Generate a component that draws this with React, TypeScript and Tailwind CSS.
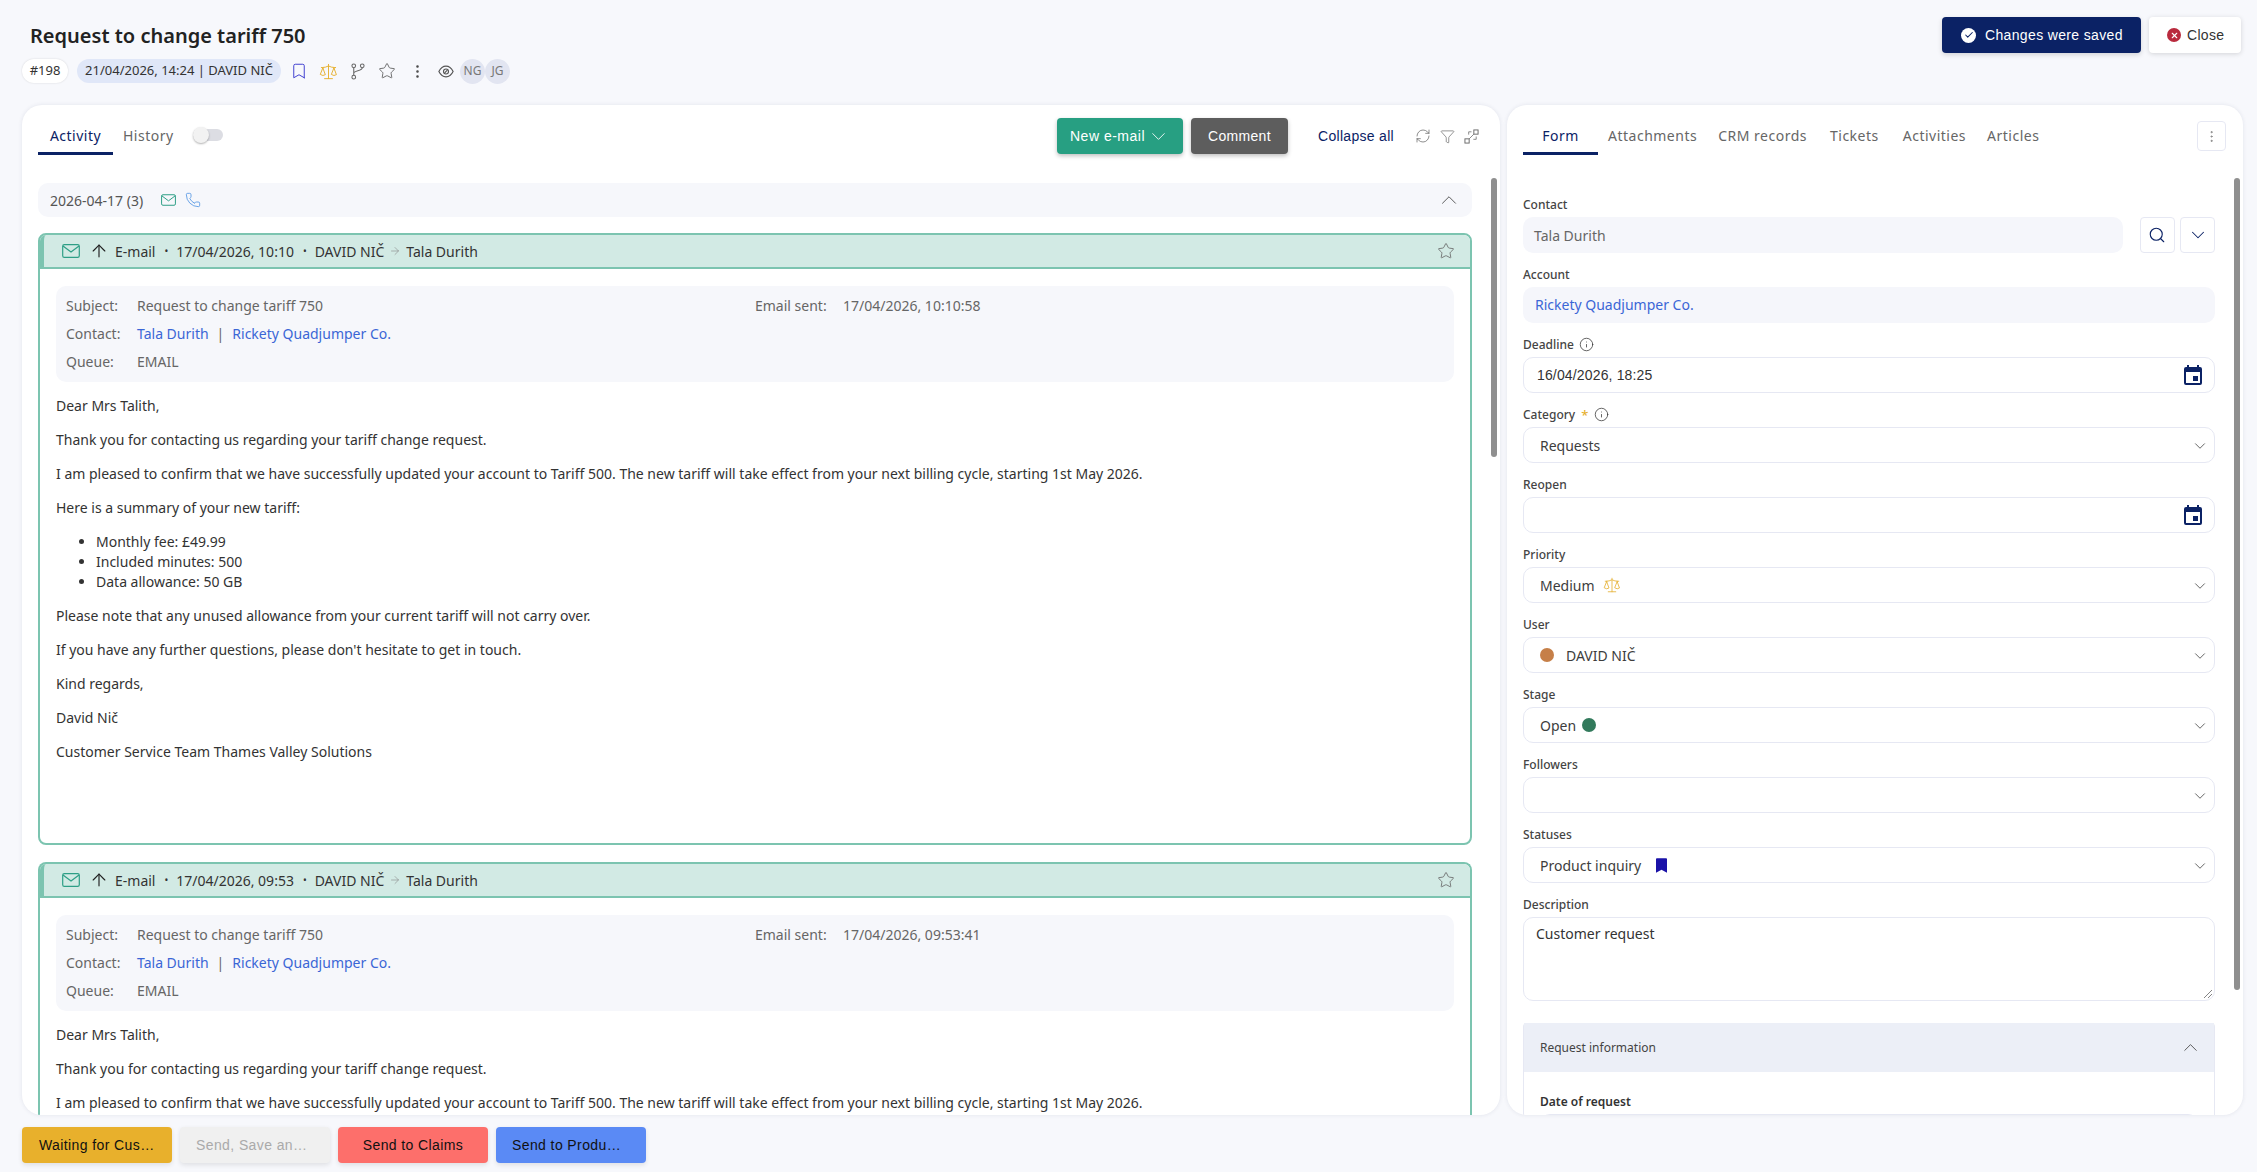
import type { ReactNode } from "react";
import {
  ArrowRight,
  ArrowUp,
  Bookmark,
  Check,
  ChevronDown,
  ChevronUp,
  EllipsisVertical,
  Filter,
  Info,
  Phone,
  RefreshCw,
  Scale,
  Search,
  Star,
  X,
} from "lucide-react";

const NOTO = "font-['Noto_Sans',sans-serif]";
const ARIAL = "font-['Liberation_Sans',Arial,sans-serif]";

function MailIcon({ className }: { className?: string }) {
  return (
    <svg viewBox="0 0 18 14" fill="none" stroke="currentColor" strokeWidth="1.2" className={className}>
      <rect x="0.7" y="0.7" width="16.6" height="12.6" rx="1.6" />
      <path d="M1 2l8 6 8-6" />
    </svg>
  );
}

function EventIcon() {
  return (
    <svg viewBox="0 0 18 20" className="h-[20px] w-[18px] text-[#0b2265]" fill="currentColor">
      <path d="M3 0h2v2h8V0h2v2h1a2 2 0 0 1 2 2v14a2 2 0 0 1-2 2H2a2 2 0 0 1-2-2V4a2 2 0 0 1 2-2h1zM2 7v11h14V7z" />
      <rect x="9" y="11" width="5" height="5" />
    </svg>
  );
}

function ExpandIcon() {
  return (
    <svg viewBox="0 0 16 16" fill="none" stroke="#666" strokeWidth="1" className="h-[15px] w-[15px]">
      <rect x="10.5" y="1" width="4.5" height="4.5" />
      <rect x="1" y="10.5" width="4.5" height="4.5" />
      <path d="M10.5 5.5l-5 5M8 3H5v3M13 8v3h-3" strokeWidth="0.8" />
    </svg>
  );
}

function EyeIcon() {
  return (
    <svg viewBox="0 0 18 14" fill="none" stroke="#555" strokeWidth="1.3" className="h-[13px] w-[16px]">
      <path d="M1 7c2-4 5-6 8-6s6 2 8 6c-2 4-5 6-8 6S3 11 1 7z" />
      <circle cx="9" cy="7" r="2.8" />
      <path d="M7.5 8.5l3-3" />
    </svg>
  );
}

function BranchIcon() {
  return (
    <svg viewBox="0 0 22 24" fill="none" stroke="#666" strokeWidth="1.5" className="ml-[12px] h-[17px] w-[16px]">
      <circle cx="5" cy="4" r="2.6" />
      <circle cx="5" cy="20" r="2.6" />
      <circle cx="17" cy="4" r="2.6" />
      <path d="M5 6.6v10.8M17 6.6c0 5-12 3.5-12 8" />
    </svg>
  );
}

function Field({
  label,
  extra,
  children,
}: {
  label: string;
  extra?: ReactNode;
  children: ReactNode;
}) {
  return (
    <div className="mb-[13px]">
      <div className="mb-[3px] flex h-[18px] items-center gap-[5px] text-[12px] font-medium leading-[18px] text-[#444]">
        {label}
        {extra}
      </div>
      {children}
    </div>
  );
}

function Box({ children, className = "" }: { children?: ReactNode; className?: string }) {
  return (
    <div
      className={
        "flex h-[36px] items-center justify-between rounded-[10px] border border-[#e6e8f3] bg-white pl-[16px] pr-[5px] text-[14px] text-[#3d3d3d] " +
        className
      }
    >
      <div className="flex items-center">{children}</div>
      <ChevronDown size={18} strokeWidth={1.2} className="mt-[1px] text-[#555]" />
    </div>
  );
}

function DateBox({ value }: { value?: string }) {
  return (
    <div className={"flex h-[36px] items-center justify-between rounded-[10px] border border-[#e6e8f3] bg-white pl-[13px] pr-[12px] text-[14px] tracking-[0.15px] text-[#333] " + ARIAL}>
      <span>{value}</span>
      <EventIcon />
    </div>
  );
}

function InfoDot() {
  return <Info size={15} strokeWidth={1.2} className="mb-[1px] text-[#333]" />;
}

function EmailCard({ time, sent, full }: { time: string; sent: string; full?: boolean }) {
  return (
    <div className={"mb-[17px] rounded-[8px] border-2 border-[#7cc4b0] bg-white " + (full ? "h-[612px]" : "h-[253px] rounded-b-none border-b-0")}>
      <div className="flex h-[34px] items-center rounded-t-[6px] border-b-2 border-l-[4px] border-[#7cc4b0] bg-[#d2eae4] pl-[18px] pr-[15px] text-[14px] text-[#333]">
        <MailIcon className="h-[14px] w-[18px] text-[#2e9f86]" />
        <ArrowUp size={20} strokeWidth={1.4} className="ml-[9px] text-[#222]" />
        <span className="ml-[6px]">E-mail</span>
        <span className="ml-[9px] mr-[8px] text-[10px]">•</span>
        <span>17/04/2026, {time}</span>
        <span className="ml-[9px] mr-[8px] text-[10px]">•</span>
        <span>DAVID NIČ</span>
        <ArrowRight size={12} strokeWidth={1.2} className="mx-[5px] text-[#888]" />
        <span>Tala Durith</span>
        <Star size={18} strokeWidth={1.1} className="ml-auto text-[#666]" />
      </div>
      <div className="px-[16px] pt-[17px]">
        <div className="flex h-[96px] rounded-[10px] bg-[#f6f7fb] pl-[10px] pt-[6px] text-[14px] leading-[28px] text-[#666]">
          <div className="w-[689px]">
            <div className="flex">
              <span className="w-[71px]">Subject:</span>
              <span>Request to change tariff 750</span>
            </div>
            <div className="flex">
              <span className="w-[71px]">Contact:</span>
              <span className="text-[#3b66d6]">Tala Durith</span>
              <span className="mx-[8px]">|</span>
              <span className="text-[#3b66d6]">Rickety Quadjumper Co.</span>
            </div>
            <div className="flex">
              <span className="w-[71px]">Queue:</span>
              <span>EMAIL</span>
            </div>
          </div>
          <div className="flex">
            <span className="w-[88px]">Email sent:</span>
            <span>{sent}</span>
          </div>
        </div>
        <div className="mt-[14px] text-[14px] leading-[20px] text-[#333]">
          <p className="mb-[14px]">Dear Mrs Talith,</p>
          <p className="mb-[14px]">Thank you for contacting us regarding your tariff change request.</p>
          <p className="mb-[14px]">
            I am pleased to confirm that we have successfully updated your account to Tariff 500. The new tariff will take effect from your next billing cycle, starting 1st May 2026.
          </p>
          {full && (
            <>
              <p className="mb-[14px]">Here is a summary of your new tariff:</p>
              <ul className="mb-[14px] list-disc pl-[40px]">
                <li>Monthly fee: £49.99</li>
                <li>Included minutes: 500</li>
                <li>Data allowance: 50 GB</li>
              </ul>
              <p className="mb-[14px]">Please note that any unused allowance from your current tariff will not carry over.</p>
              <p className="mb-[14px]">If you have any further questions, please don't hesitate to get in touch.</p>
              <p className="mb-[14px]">Kind regards,</p>
              <p className="mb-[14px]">David Nič</p>
              <p>Customer Service Team Thames Valley Solutions</p>
            </>
          )}
        </div>
      </div>
    </div>
  );
}

function FooterButton({ label, className }: { label: string; className: string }) {
  return (
    <button className={"h-[36px] w-[150px] rounded-[4px] text-[14px] tracking-[0.4px] shadow-[0_2px_5px_rgba(0,0,0,0.1)] " + ARIAL + " " + className}>
      {label}
    </button>
  );
}

export default function App() {
  return (
    <div className={"flex h-[1172px] w-[2257px] flex-col overflow-hidden bg-[#f7f8fc] pl-[22px] pr-[14px] " + NOTO}>
      <header className="relative h-[105px] shrink-0">
        <h1 className="pl-[8px] pt-[21px] text-[20px] font-semibold leading-[30px] text-[#222]">
          Request to change tariff 750
        </h1>
        <div className="mt-[8px] flex h-[24px] items-center text-[13px] text-[#333]">
          <span className="flex h-[24px] w-[46px] items-center justify-center rounded-full bg-white shadow-[0_0_2px_rgba(0,0,0,0.15)]">#198</span>
          <span className="ml-[9px] flex h-[24px] w-[204px] items-center justify-center rounded-full bg-[#e0e7f8]">
            21/04/2026, 14:24 | DAVID NIČ
          </span>
          <Bookmark size={18} strokeWidth={1.3} className="ml-[9px] text-[#3f3fd0]" />
          <Scale size={19} strokeWidth={1.2} className="ml-[11px] text-[#e6b030]" />
          <BranchIcon />
          <Star size={18} strokeWidth={1.1} className="ml-[12px] text-[#555]" />
          <EllipsisVertical size={17} strokeWidth={1.6} className="ml-[13px] text-[#444]" />
          <span className="ml-[12px]"><EyeIcon /></span>
          <span className="ml-[6px] flex h-[25px] w-[25px] items-center justify-center rounded-full bg-[#e2e5f1] text-[12px] text-[#777]">NG</span>
          <span className="flex h-[25px] w-[25px] items-center justify-center rounded-full bg-[#e2e5f1] text-[12px] text-[#777]">JG</span>
        </div>
        <div className="absolute right-[2px] top-[17px] flex gap-[8px]">
          <button className="flex h-[36px] w-[199px] items-center rounded-[4px] bg-[#0b2265] pl-[19px] text-[14px] tracking-[0.35px] text-white shadow-[0_2px_5px_rgba(0,0,0,0.15)]">
            <span className="flex h-[15px] w-[15px] items-center justify-center rounded-full bg-white">
              <Check size={10} strokeWidth={2.5} className="text-[#0b2265]" />
            </span>
            <span className={"ml-[9px] " + ARIAL}>Changes were saved</span>
          </button>
          <button className="flex h-[36px] w-[92px] items-center rounded-[4px] bg-white pl-[18px] text-[14px] tracking-[0.3px] text-[#333] shadow-[0_1px_5px_rgba(0,0,0,0.15)]">
            <span className="flex h-[14px] w-[14px] items-center justify-center rounded-full bg-[#b92a3d]">
              <X size={9} strokeWidth={3} className="text-white" />
            </span>
            <span className={"ml-[6px] " + ARIAL}>Close</span>
          </button>
        </div>
      </header>

      <div className="flex h-[1010px] shrink-0 gap-[7px]">
        {/* activity column */}
        <section className="relative w-[1478px] overflow-hidden rounded-[20px] bg-white shadow-[0_0_4px_rgba(40,50,90,0.1)]">
          <div className="flex h-[50px] items-start pl-[16px] pr-[21px] tracking-[0.5px]">
            <div className="flex h-[50px] w-[75px] items-center justify-center border-b-[3px] border-[#0b2265] pt-[13px] text-[14px] text-[#0b2265]">Activity</div>
            <div className="ml-[10px] flex h-[50px] items-center pt-[10px] text-[14px] text-[#666]">History</div>
            <div className="relative ml-[19px] mt-[24px] h-[12px] w-[30px] rounded-full bg-[#dcdde3]">
              <div className="absolute left-0 top-[-2px] h-[16px] w-[16px] rounded-full bg-[#f2f2f2] shadow-[0_1px_2px_rgba(0,0,0,0.3)]" />
            </div>
            <button className={"ml-auto mt-[13px] flex h-[36px] w-[126px] items-center justify-center gap-[2px] rounded-[4px] bg-[#279f82] text-[14px] tracking-[0.5px] text-white shadow-[0_2px_4px_rgba(0,0,0,0.25)] " + ARIAL}>
              New e-mail
              <ChevronDown size={23} strokeWidth={0.9} />
            </button>
            <button className={"ml-[8px] mt-[13px] h-[36px] w-[97px] rounded-[4px] bg-[#5d5d5d] text-[14px] tracking-[0.3px] text-white shadow-[0_2px_4px_rgba(0,0,0,0.25)] " + ARIAL}>
              Comment
            </button>
            <span className={"ml-[30px] mt-[23px] text-[14px] leading-[16px] tracking-[0.3px] text-[#0b2265] " + ARIAL}>Collapse all</span>
            <div className="ml-[21px] mt-[23px] flex items-center gap-[9px] text-[#666]">
              <RefreshCw size={16} strokeWidth={1.1} />
              <Filter size={15} strokeWidth={1.1} />
              <ExpandIcon />
            </div>
          </div>
          <div className="pl-[16px] pr-[28px] pt-[28px]">
            <div className="mb-[16px] flex h-[34px] items-center rounded-[10px] bg-[#f6f7fb] pl-[12px] pr-[10px] text-[14px] text-[#555]">
              <span>2026-04-17 (3)</span>
              <MailIcon className="ml-[18px] h-[12px] w-[15px] text-[#2e9f86]" />
              <Phone size={16} strokeWidth={1.2} className="ml-[9px] text-[#4a90e2]" />
              <ChevronUp size={26} strokeWidth={0.8} className="ml-auto text-[#444]" />
            </div>
            <EmailCard time="10:10" sent="17/04/2026, 10:10:58" full />
            <EmailCard time="09:53" sent="17/04/2026, 09:53:41" />
          </div>
          <div className="absolute right-[3px] top-[73px] h-[279px] w-[6px] rounded-full bg-[#8f8f8f]" />
        </section>

        {/* form column */}
        <section className="relative w-[736px] overflow-hidden rounded-[20px] bg-white shadow-[0_0_4px_rgba(40,50,90,0.1)]">
          <div className="flex h-[50px] items-start pl-[16px] text-[14px] tracking-[0.5px] text-[#666]">
            <div className="flex h-[50px] w-[75px] items-center justify-center border-b-[3px] border-[#0b2265] pt-[13px] text-[#0b2265]">Form</div>
            <div className="flex h-[50px] items-center pt-[10px]">
              <span className="ml-[10px]">Attachments</span>
              <span className="ml-[21px]">CRM records</span>
              <span className="ml-[23px]">Tickets</span>
              <span className="ml-[24px]">Activities</span>
              <span className="ml-[21px]">Articles</span>
            </div>
            <div className="ml-auto mr-[17px] mt-[16px] flex h-[30px] w-[29px] items-center justify-center rounded-[4px] border border-[#e6e8f3]">
              <EllipsisVertical size={15} strokeWidth={1} className="text-[#666]" />
            </div>
          </div>
          <div className="pl-[16px] pr-[28px] pt-[41px]">
            <Field label="Contact">
              <div className="flex gap-[5px]">
                <div className="mr-[12px] flex h-[36px] w-[600px] items-center rounded-[10px] bg-[#f5f6fb] pl-[11px] text-[14px] text-[#666]">Tala Durith</div>
                <div className="flex h-[36px] w-[35px] items-center justify-center rounded-[4px] border border-[#e6e8f3]">
                  <Search size={18} strokeWidth={1.5} className="-ml-[2px] text-[#0b2265]" />
                </div>
                <div className="flex h-[36px] w-[35px] items-center justify-center rounded-[4px] border border-[#e6e8f3]">
                  <ChevronDown size={22} strokeWidth={1.1} className="text-[#0b2265]" />
                </div>
              </div>
            </Field>
            <Field label="Account">
              <div className="flex h-[36px] items-center rounded-[10px] bg-[#f5f6fb] pb-[1px] pl-[12px] text-[14px] text-[#3b66d6]">Rickety Quadjumper Co.</div>
            </Field>
            <Field label="Deadline" extra={<InfoDot />}>
              <DateBox value="16/04/2026, 18:25" />
            </Field>
            <Field
              label="Category"
              extra={
                <>
                  <span className="ml-[1px] text-[13px] text-[#e6b030]">*</span>
                  <span className="ml-[1px] flex"><InfoDot /></span>
                </>
              }
            >
              <Box>Requests</Box>
            </Field>
            <Field label="Reopen">
              <DateBox />
            </Field>
            <Field label="Priority">
              <Box>
                Medium
                <Scale size={18} strokeWidth={1.1} className="ml-[8px] text-[#e6b030]" />
              </Box>
            </Field>
            <Field label="User">
              <Box>
                <span className="mr-[12px] h-[14px] w-[14px] rounded-full bg-[#c67f48]" />
                DAVID NIČ
              </Box>
            </Field>
            <Field label="Stage">
              <Box>
                Open
                <span className="ml-[6px] h-[14px] w-[14px] rounded-full bg-[#327a5c]" />
              </Box>
            </Field>
            <Field label="Followers">
              <Box />
            </Field>
            <Field label="Statuses">
              <Box>
                Product inquiry
                <svg viewBox="0 0 12 16" className="ml-[15px] h-[15px] w-[11px]" fill="#1a12a8">
                  <path d="M1 0h10a1 1 0 0 1 1 1v15l-6-3.5L0 16V1a1 1 0 0 1 1-1z" />
                </svg>
              </Box>
            </Field>
            <Field label="Description">
              <div className="relative h-[84px] rounded-[10px] border border-[#e6e8f3] pl-[12px] pt-[5px] text-[14px] text-[#333]">
                Customer request
                <svg viewBox="0 0 10 10" className="absolute bottom-[1px] right-[1px] h-[10px] w-[10px]" stroke="#666" strokeWidth="0.8">
                  <path d="M1 9l8-8M5 9l4-4" />
                </svg>
              </div>
            </Field>
            <div className="mt-[22px] rounded-t-[4px] border-x border-[#e6e8f3]">
              <div className="flex h-[49px] items-center justify-between bg-[#eceff7] pl-[16px] pr-[12px] text-[12px] text-[#444]">
                Request information
                <ChevronUp size={23} strokeWidth={0.9} className="text-[#444]" />
              </div>
              <div className="px-[16px] pt-[21px] text-[12px] font-semibold leading-[18px] text-[#333]">
                Date of request
                <div className="mt-[3px] h-[36px] rounded-[10px] border border-[#e6e8f3]" />
              </div>
            </div>
          </div>
          <div className="absolute right-[3px] top-[73px] h-[812px] w-[6px] rounded-full bg-[#8f8f8f]" />
        </section>
      </div>

      <footer className="mt-[12px] flex gap-[8px] text-[#111]">
        <FooterButton label="Waiting for Cus…" className="bg-[#e8b02c] pl-[17px] text-left" />
        <FooterButton label="Send, Save an…" className="bg-[#f0f0f0] pl-[16px] text-left text-[#aaa]" />
        <FooterButton label="Send to Claims" className="bg-[#fd6f6b] text-center" />
        <FooterButton label="Send to Produ…" className="bg-[#5a8af5] pl-[16px] text-left" />
      </footer>
    </div>
  );
}
